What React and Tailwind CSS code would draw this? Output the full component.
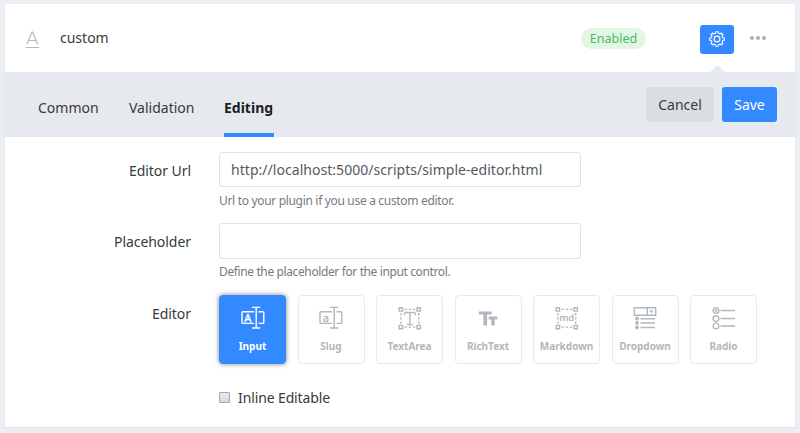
const stroke = { fill: 'none', stroke: 'currentColor', strokeWidth: 1.4 };

function InputIcon({ letter }) {
  return (
    <svg width="24" height="24" viewBox="0 0 24 24" {...stroke}>
      <path d="M13 5.800H2a1 1 0 0 0-1 1v9.600a1 1 0 0 0 1 1h11M17.500 5.800h4.300a1 1 0 0 1 1 1v9.600a1 1 0 0 1-1 1h-4.300" />
      <path d="M15.200 1.500v20.500M11 1.400h8.200M11 22h8.200" />
      <text x="6.800" y="15.500" textAnchor="middle" fontSize="11" fill="currentColor" strokeWidth="0.400" className="font-['Noto_Sans',sans-serif]">{letter}</text>
    </svg>
  );
}

function Handles() {
  return (
    <>
      <path d="M1.200 1.700h3.400v3.400H1.200zM19 1.700h3.400v3.400H19zM1.200 19.400h3.400v3.400H1.200zM19 19.400h3.400v3.400H19z" />
      <path strokeDasharray="2.4 1.8" d="M6.500 3.400H18M6.500 21.100H18M2.900 7v11M20.700 7v11" />
    </>
  );
}

function TextAreaIcon() {
  return (
    <svg width="24" height="24" viewBox="0 0 24 24" {...stroke}>
      <Handles />
      <path d="M6.200 9.200 7 6.500h9.800l.8 2.700M11.900 6.500v11.800M9 18.500h5.800" />
    </svg>
  );
}

function MarkdownIcon() {
  return (
    <svg width="24" height="24" viewBox="0 0 24 24" {...stroke}>
      <Handles />
      <text x="11.600" y="15.300" textAnchor="middle" fontSize="9.600" fontWeight="600" letterSpacing="-0.300" fill="currentColor" stroke="none" className="font-['Noto_Sans',sans-serif]">md</text>
    </svg>
  );
}

function RichTextIcon() {
  return (
    <svg width="24" height="24" viewBox="0 0 24 24" fill="currentColor">
      <path d="M2.800 5.400h13v3.100h-4.700v11H7.400v-11H2.800zM12.700 10.400h8.700v3h-2.700v6.100h-3.400v-6.100h-2.600z" />
    </svg>
  );
}

function DropdownIcon() {
  return (
    <svg width="24" height="24" viewBox="0 0 24 24" {...stroke}>
      <path d="M1.300 1.700h21.400v7.600H1.300zM14.300 1.700v7.600" />
      <path fill="currentColor" stroke="none" d="M16.300 4.500h4.400l-2.200 2.700z" />
      <path d="M7.500 12.700h14.500M7.500 17h14.500M7.500 21.500h14.500" />
      <g fill="currentColor" stroke="none">
        <circle cx="4" cy="12.700" r="1.900" />
        <circle cx="4" cy="17" r="1.900" />
        <circle cx="4" cy="21.500" r="1.900" />
      </g>
    </svg>
  );
}

function RadioIcon() {
  return (
    <svg width="24" height="24" viewBox="0 0 24 24" {...stroke}>
      <circle cx="4" cy="4.500" r="2.900" />
      <circle cx="4" cy="4.500" r="1.300" fill="currentColor" stroke="none" />
      <circle cx="4" cy="12.500" r="2.900" />
      <circle cx="4" cy="20" r="2.900" />
      <path d="M8.500 4.500h14.500M8.500 12.500h14.500M8.500 20h14.500" />
    </svg>
  );
}

function GearIcon() {
  const teeth = 8;
  const step = (Math.PI * 2) / teeth;
  const points = [];
  for (let i = 0; i < teeth; i++) {
    for (const [offset, radius] of [[-0.3, 5.9], [-0.2, 7.4], [0.2, 7.4], [0.3, 5.9]]) {
      const angle = (i + offset) * step;
      points.push(`${(8 + radius * Math.sin(angle)).toFixed(2)},${(8 - radius * Math.cos(angle)).toFixed(2)}`);
    }
  }
  return (
    <svg width="16" height="16" viewBox="0 0 16 16" fill="none" stroke="currentColor" strokeWidth="1.1" strokeLinejoin="round">
      <polygon points={points.join(' ')} />
      <circle cx="8" cy="8" r="2.900" />
    </svg>
  );
}

const editors = [
  { name: 'Input', icon: <InputIcon letter="A" />, active: true },
  { name: 'Slug', icon: <InputIcon letter="a" /> },
  { name: 'TextArea', icon: <TextAreaIcon /> },
  { name: 'RichText', icon: <RichTextIcon /> },
  { name: 'Markdown', icon: <MarkdownIcon /> },
  { name: 'Dropdown', icon: <DropdownIcon /> },
  { name: 'Radio', icon: <RadioIcon /> },
];

function EditorTile({ name, icon, active }) {
  return (
    <div className={`flex h-[69px] flex-col items-center rounded-[4px] border pt-[10px] ${active ? 'border-[#3389ff] bg-[#3389ff] text-white shadow-[0_0_5px_rgba(0,0,0,0.5)]' : 'border-[#e6e9f0] text-[#b0b7bd]'}`}>
      {icon}
      <span className="mt-[9px] text-[10px] leading-[14px] font-bold">{name}</span>
    </div>
  );
}

function Label({ children }) {
  return <label className="block w-[186px] shrink-0 pt-px text-right text-[14px] leading-[36px] tracking-[-0.05px]">{children}</label>;
}

export default function App() {
  return (
    <div className="h-[433px] w-[800px] bg-[#ebeff3] pt-1 font-['Noto_Sans','Open_Sans',sans-serif] text-[14px] text-[#373a3c]">
      <div className="mx-[5px] h-[423px] bg-white shadow-[0_1px_1px_#dfe4e9]">
        <div className="flex h-[68px] items-center pl-5">
          <svg width="15" height="18" viewBox="0 0 15 18" fill="none" stroke="#b4bbc1" strokeWidth="1.200" className="mt-[3px]">
            <path d="M1.800 13.500 6.900 1.200h.8l5.100 12.300M3.500 9.500h7.600M.500 16.500h13.500" />
          </svg>
          <span className="-mt-px ml-5">custom</span>
          <span className="ml-auto flex h-[21px] w-[65px] items-center justify-center rounded-full bg-[#e2f6e5] pt-[2px] text-[12.500px] text-[#4cbb60]">Enabled</span>
          <button className="mt-[11px] mb-[9px] ml-[54px] flex h-[29px] w-[34px] items-center justify-center rounded-[3px] bg-[#3389ff] text-white"><GearIcon /></button>
          <div className="mr-[29px] ml-[16px] flex gap-[2px]">
            <i className="size-[4px] rounded-full bg-[#a9b2bc]" />
            <i className="size-[4px] rounded-full bg-[#a9b2bc]" />
            <i className="size-[4px] rounded-full bg-[#a9b2bc]" />
          </div>
        </div>
        <div className="relative -mx-px flex h-[65px] bg-[#e6e9ee] pl-[34px]">
          <svg className="absolute top-[-7px] left-[706px]" width="15" height="7" viewBox="0 0 15 7"><path fill="#e6e9ee" d="M0 7 7.500 0 15 7z" /></svg>
          <nav className="flex gap-[30px] leading-[71px]">
            <span className="w-[61px] whitespace-nowrap">Common</span>
            <span className="w-[65px] whitespace-nowrap">Validation</span>
            <span className="h-[65px] w-[50px] border-b-4 border-[#3389ff] font-bold whitespace-nowrap text-[#1b1d20]">Editing</span>
          </nav>
          <div className="mt-[15px] mr-[19px] ml-auto flex h-[35px] gap-2">
            <button className="w-[68px] rounded-[3px] bg-[#d9dee3]">Cancel</button>
            <button className="w-[55px] rounded-[3px] bg-[#3389ff] text-white">Save</button>
          </div>
        </div>
        <div className="pt-[15px]">
          <div className="flex gap-7">
            <Label>Editor Url</Label>
            <div className="w-[362px]">
              <div className="h-[35px] rounded-[3px] border border-[#dbe4eb] px-[11px] leading-[34px] tracking-[0.04px] whitespace-nowrap text-[#55595f]">http://localhost:5000/scripts/simple-editor.html</div>
              <p className="mt-[5px] text-[12px] leading-[18px] tracking-[-0.32px] text-[#737b83]">Url to your plugin if you use a custom editor.</p>
            </div>
          </div>
          <div className="mt-[13px] flex gap-7">
            <Label>Placeholder</Label>
            <div className="w-[362px]">
              <div className="h-[36px] rounded-[3px] border border-[#dbe4eb]" />
              <p className="mt-[4px] text-[12px] leading-[18px] tracking-[-0.38px] text-[#737b83]">Define the placeholder for the input control.</p>
            </div>
          </div>
          <div className="mt-[14px] flex gap-7">
            <Label>Editor</Label>
            <div className="grid w-[538px] grid-cols-7 gap-[11.500px]">
              {editors.map((editor) => <EditorTile key={editor.name} {...editor} />)}
            </div>
          </div>
          <label className="mt-[24px] ml-[214px] flex items-center gap-[8px] leading-[20px] tracking-[-0.12px]">
            <span className="-mt-[2px] size-[11px] rounded-[1px] border border-[#a6a6a6] bg-gradient-to-b from-[#e8e8e8] to-[#dadada]" />
            Inline Editable
          </label>
        </div>
      </div>
    </div>
  );
}
